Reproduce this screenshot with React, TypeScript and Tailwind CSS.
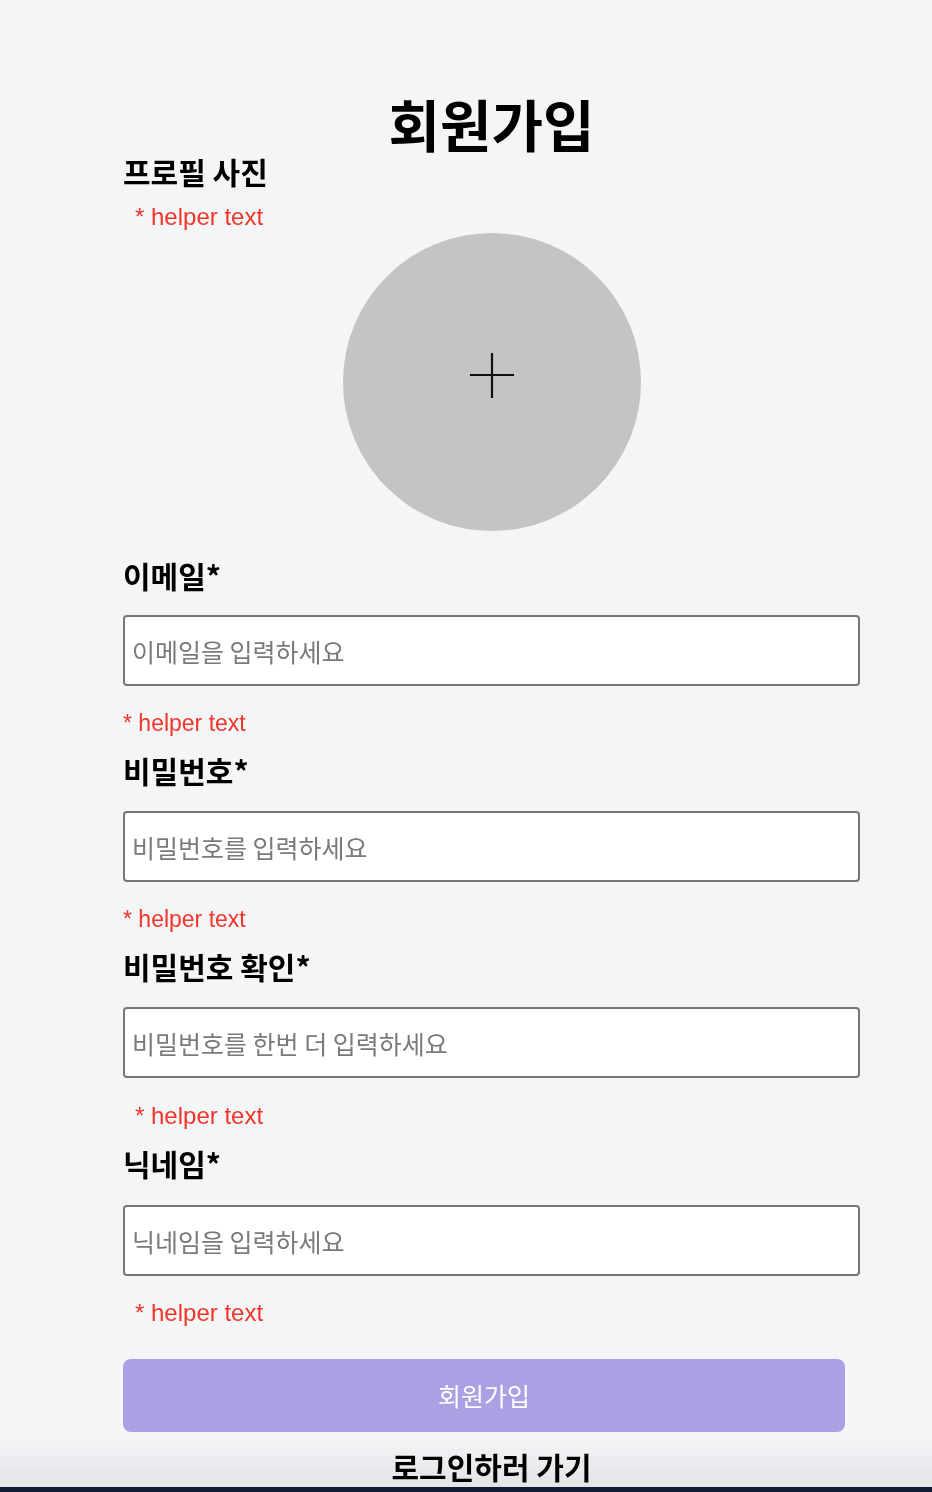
import React from 'react';

const kr = "font-['Noto_Sans_CJK_KR','Noto_Sans',sans-serif]";
const helperFont = "font-['Liberation_Sans',Arial,sans-serif]";

function Label({ text, className = '' }: { text: string; className?: string }) {
  return (
    <div className={`${kr} h-[30px] text-[30px] leading-[30px] font-bold text-black ${className}`}>
      {text}
    </div>
  );
}

function Helper({ indent, className = '' }: { indent?: boolean; className?: string }) {
  return (
    <div
      className={`${helperFont} h-[28px] leading-[28px] text-[#f2352a] ${
        indent ? 'pl-[12px] text-[24px]' : 'text-[23px]'
      } ${className}`}
    >
      * helper text
    </div>
  );
}

function Field({ placeholder, className = '', type = 'text' }: { placeholder: string; className?: string; type?: string }) {
  return (
    <input
      type={type}
      placeholder={placeholder}
      className={`${kr} block w-full h-[71px] bg-white border-2 border-[#767676] rounded-[4px] px-[7px] text-[25px] text-black placeholder:text-[#7a7a7a] outline-none ${className}`}
    />
  );
}

export default function App() {
  return (
    <div className="min-h-[1492px] bg-[#f4f5f7] relative">
      <div className="pointer-events-none fixed bottom-0 left-0 right-0 z-0">
        <div className="h-[50px] bg-gradient-to-b from-[#f4f5f7]/0 to-[#e2e3e6]" />
        <div className="h-[5px] bg-[#101a33]" />
      </div>

      <div className="relative z-10 ml-[123px] w-[737px] pt-[90px] pb-[10px]">
        <h1 className={`${kr} h-[66px] text-center text-[56px] leading-[66px] font-bold text-black`}>회원가입</h1>

        <Label text="프로필 사진" />
        <Helper indent className="mt-[17px]" />

        <button className="mt-[2px] mx-auto flex items-center justify-center w-[298px] h-[298px] rounded-full bg-[#c4c4c4]">
          <svg width="46" height="46" viewBox="0 0 46 46" className="mb-[14px]" fill="none" stroke="#111" strokeWidth="2.2">
            <path d="M23 1v45M1 23h44" />
          </svg>
        </button>

        <Label text="이메일*" className="mt-[29px]" />
        <Field placeholder="이메일을 입력하세요" className="mt-[25px]" />
        <Helper className="mt-[23px]" />

        <Label text="비밀번호*" className="mt-[18px]" />
        <Field placeholder="비밀번호를 입력하세요" type="password" className="mt-[26px]" />
        <Helper className="mt-[23px]" />

        <Label text="비밀번호 확인*" className="mt-[18px]" />
        <Field placeholder="비밀번호를 한번 더 입력하세요" type="password" className="mt-[26px]" />
        <Helper indent className="mt-[24px]" />

        <Label text="닉네임*" className="mt-[18px]" />
        <Field placeholder="닉네임을 입력하세요" className="mt-[27px]" />
        <Helper indent className="mt-[23px]" />

        <button
          className={`${kr} mt-[32px] block w-[722px] h-[73px] rounded-[8px] bg-[#aaa1e4] text-white text-[25px]`}
        >
          회원가입
        </button>

        <div className={`${kr} mt-[16px] h-[36px] text-center text-[30px] leading-[36px] font-bold text-black`}>
          로그인하러 가기
        </div>
      </div>
    </div>
  );
}
